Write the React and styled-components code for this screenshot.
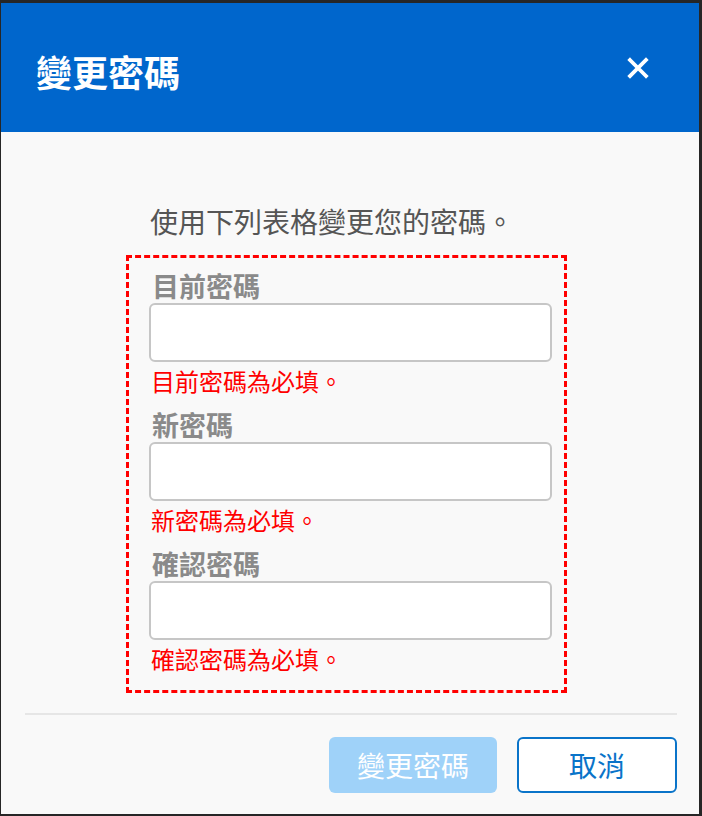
import React, { useState } from 'react';
import styled, { createGlobalStyle } from 'styled-components';

const GlobalStyle = createGlobalStyle`
  html, body {
    margin: 0;
    padding: 0;
    background: #262626;
  }
  body {
    font-family: "Noto Sans CJK TC", "Noto Sans", sans-serif;
  }
`;

const fields = [
  { key: 'current', label: '目前密碼', error: '目前密碼為必填。' },
  { key: 'next', label: '新密碼', error: '新密碼為必填。' },
  { key: 'confirm', label: '確認密碼', error: '確認密碼為必填。' },
];

const App = () => {
  const [values, setValues] = useState({ current: '', next: '', confirm: '' });

  const handleChange = (key) => (e) => {
    setValues({ ...values, [key]: e.target.value });
  };

  return (
    <>
      <GlobalStyle />
      <Page>
        <Modal>
          <Header>
            <Title>變更密碼</Title>
            <CloseButton aria-label="關閉">
              <svg width="22" height="22" viewBox="0 0 22 22">
                <path d="M3 3 L19 19 M19 3 L3 19" stroke="#fff" strokeWidth="3.8" strokeLinecap="square" />
              </svg>
            </CloseButton>
          </Header>
          <Body>
            <Content>
              <Intro>使用下列表格變更您的密碼。</Intro>
              <FieldBox>
                {fields.map((f, i) => (
                  <Field key={f.key} $first={i === 0}>
                    <Label>{f.label}</Label>
                    <Input
                      type="password"
                      value={values[f.key]}
                      onChange={handleChange(f.key)}
                    />
                    <ErrorText>{f.error}</ErrorText>
                  </Field>
                ))}
              </FieldBox>
            </Content>
          </Body>
          <Footer>
            <Divider />
            <ButtonRow>
              <PrimaryButton disabled>變更密碼</PrimaryButton>
              <SecondaryButton>取消</SecondaryButton>
            </ButtonRow>
          </Footer>
        </Modal>
      </Page>
    </>
  );
};

const Page = styled.div`
  padding: 3px 0 0 1px;
  height: 816px;
  box-sizing: border-box;
`;

const Modal = styled.div`
  width: 698px;
  height: 811px;
  background: #f9f9f9;
  display: flex;
  flex-direction: column;
`;

const Header = styled.div`
  height: 129px;
  background: #0066cc;
  display: flex;
  align-items: center;
  justify-content: space-between;
  padding: 0 50px 0 35px;
  box-sizing: border-box;
`;

const Title = styled.h1`
  margin: 6px 0 0;
  font-size: 36px;
  font-weight: 700;
  line-height: 40px;
  color: #fff;
`;

const CloseButton = styled.button`
  background: none;
  border: none;
  padding: 0;
  width: 22px;
  height: 22px;
  display: flex;
  cursor: pointer;
`;

const Body = styled.div`
  flex: 1;
  padding-top: 69px;
`;

const Content = styled.div`
  width: 441px;
  margin-left: 125px;
`;

const Intro = styled.p`
  margin: 0 0 14px;
  padding-left: 24px;
  font-size: 28px;
  line-height: 40px;
  color: #555;
`;

const FieldBox = styled.div`
  border: 3px dashed #ff0000;
  padding: 13px 12px 16px 20px;
`;

const Field = styled.div`
  display: flex;
  flex-direction: column;
  margin-top: ${(p) => (p.$first ? '0' : '14px')};
`;

const Label = styled.label`
  margin-bottom: 2px;
  padding-left: 3px;
  font-size: 27px;
  font-weight: 700;
  line-height: 30px;
  color: #8a8a8a;
`;

const Input = styled.input`
  height: 59px;
  box-sizing: border-box;
  border: 2px solid #c6c6c6;
  border-radius: 6px;
  background: #fff;
  font-size: 24px;
  padding: 0 12px;
  outline: none;
`;

const ErrorText = styled.div`
  margin-top: 4px;
  padding-left: 2px;
  font-size: 24px;
  line-height: 30px;
  color: #ff0000;
`;

const Footer = styled.div`
  padding: 0 22px 21px 24px;
`;

const Divider = styled.div`
  height: 2px;
  background: #e6e6e6;
`;

const ButtonRow = styled.div`
  display: flex;
  justify-content: flex-end;
  gap: 20px;
  margin-top: 22px;
`;

const BaseButton = styled.button`
  height: 56px;
  border-radius: 6px;
  font-family: "Noto Sans CJK TC", "Noto Sans", sans-serif;
  font-size: 28px;
  line-height: 1;
  box-sizing: border-box;
  cursor: pointer;
`;

const PrimaryButton = styled(BaseButton)`
  width: 168px;
  background: #9fd2f9;
  color: #fff;
  border: none;

  &:disabled {
    cursor: default;
  }
`;

const SecondaryButton = styled(BaseButton)`
  width: 160px;
  background: #fff;
  color: #0a74c9;
  border: 2px solid #0a74c9;
`;

export default App;
